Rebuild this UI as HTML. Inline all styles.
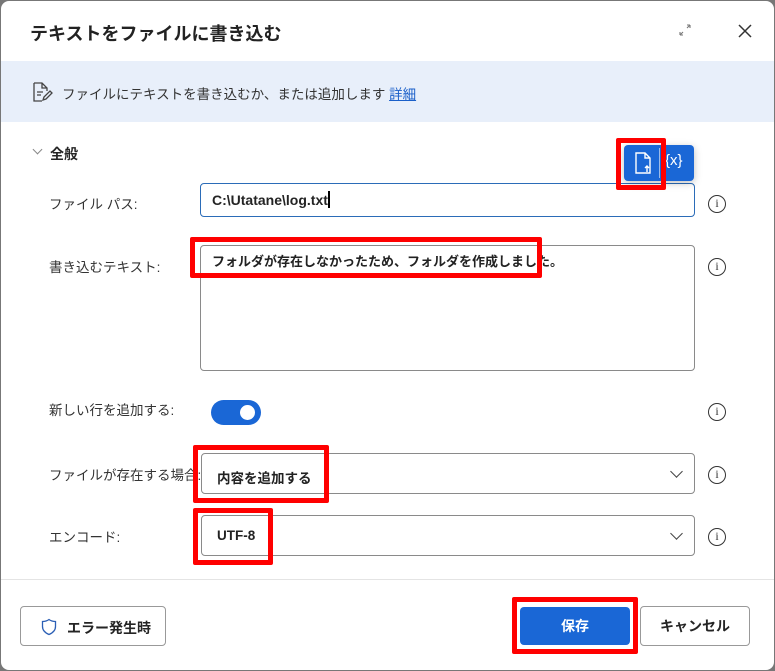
<!DOCTYPE html>
<html><head><meta charset="utf-8"><style>
*{box-sizing:border-box;margin:0;padding:0}
body{width:775px;height:671px;background:#777;position:relative;overflow:hidden;font-family:"Liberation Sans","Noto Sans CJK JP",sans-serif;color:#242424}
.win{position:absolute;left:1px;top:1px;width:773px;height:669px;background:#fff;border-radius:8px}
.a{position:absolute}
.title{left:29px;top:19px;font-size:18px;font-weight:bold;color:#222}
.band{left:0;top:60px;width:773px;height:61px;background:#e8effa}
.lbl{font-size:13.5px;color:#333}
.inp{border:1px solid #8a8a8a;border-radius:4px;background:#fff}
.red{border:5px solid #f00;border-radius:2px}
.info{width:18px;height:18px;border:1.4px solid #333;border-radius:50%;font-size:12px;text-align:center;line-height:15px;font-family:"Liberation Serif",serif;color:#333}
.chev{width:9px;height:9px;border-right:1.5px solid #444;border-bottom:1.5px solid #444;transform:rotate(45deg)}
.val{font-size:13.5px;font-weight:bold;color:#222}
.btn{border:1px solid #999;border-radius:4px;background:#fff;font-size:14px;font-weight:bold;text-align:center}
</style></head><body>
<div class="win">
<div class="a title">テキストをファイルに書き込む</div>
<svg class="a" style="left:677px;top:22px" width="14" height="14" viewBox="0 0 14 14"><path d="M2 12L5 9M2 12h3M2 12V9M12 2L9 5M12 2H9M12 2v3" stroke="#777" stroke-width="1.1" fill="none"/></svg>
<svg class="a" style="left:737px;top:23px" width="14" height="14" viewBox="0 0 14 14"><path d="M1 1L13 13M13 1L1 13" stroke="#333" stroke-width="1.5"/></svg>
<div class="a band"></div>
<svg class="a" style="left:30px;top:80px" width="22" height="22" viewBox="0 0 22 22"><path d="M3 2h8l5 5v3M3 2v18h8M11 2v5h5M6 11h6M6 14h4" stroke="#444" stroke-width="1.3" fill="none"/><path d="M12 19l1-3 6-6 2 2-6 6z" stroke="#444" stroke-width="1.3" fill="none"/></svg>
<div class="a" style="left:61px;top:82px;font-size:13.5px;color:#333">ファイルにテキストを書き込むか、または追加します <span style="color:#1a5fc9;text-decoration:underline">詳細</span></div>
<div class="a chev" style="left:33px;top:145px;width:7px;height:7px;border-color:#888"></div>
<div class="a" style="left:49px;top:143px;font-size:14px;font-weight:bold">全般</div>

<div class="a lbl" style="left:48px;top:192px">ファイル パス:</div>
<div class="a inp" style="left:199px;top:182px;width:495px;height:34px;border-color:#2b6cb8"></div>
<div class="a" style="left:211px;top:190px;font-size:14px;font-weight:bold">C:\Utatane\log.txt<span style="display:inline-block;width:2px;height:17px;background:#000;vertical-align:-3px"></span></div>
<div class="a info" style="left:707px;top:194px">i</div>
<div class="a" style="left:623px;top:144px;width:70px;height:36px;background:#1a67d6;border-radius:4px;box-shadow:0 2px 8px rgba(0,0,0,.25)"></div>
<svg class="a" style="left:630px;top:150px" width="24" height="24" viewBox="0 0 24 24"><path d="M5 2h9l5 5v15H5z M14 2v5h5" stroke="#fff" stroke-width="1.4" fill="none"/><path d="M16 21v-6M14 17l2-2 2 2" stroke="#fff" stroke-width="1.4" fill="none"/></svg>
<div class="a" style="left:658px;top:147px;width:1px;height:30px;background:#9bbbe8"></div>
<div class="a" style="left:664px;top:151px;color:#fff;font-size:15px">{x}</div>
<div class="a red" style="left:615px;top:137px;width:50px;height:52px"></div>

<div class="a lbl" style="left:48px;top:255px">書き込むテキスト:</div>
<div class="a inp" style="left:199px;top:244px;width:495px;height:126px"></div>
<div class="a val" style="left:211px;top:250px;font-size:13px">フォルダが存在しなかったため、フォルダを作成しました。</div>
<div class="a red" style="left:189px;top:236px;width:352px;height:41px"></div>
<div class="a info" style="left:707px;top:257px">i</div>

<div class="a lbl" style="left:48px;top:398px">新しい行を追加する:</div>
<div class="a" style="left:210px;top:399px;width:50px;height:25px;border-radius:13px;background:#1a67d6"></div>
<div class="a" style="left:239px;top:404px;width:15px;height:15px;border-radius:50%;background:#fff"></div>
<div class="a info" style="left:707px;top:402px">i</div>

<div class="a lbl" style="left:48px;top:463px">ファイルが存在する場合:</div>
<div class="a inp" style="left:200px;top:452px;width:494px;height:41px"></div>
<div class="a val" style="left:216px;top:466px">内容を追加する</div>
<div class="a chev" style="left:671px;top:466px"></div>
<div class="a red" style="left:192px;top:444px;width:136px;height:58px"></div>
<div class="a info" style="left:707px;top:465px">i</div>

<div class="a lbl" style="left:48px;top:525px">エンコード:</div>
<div class="a inp" style="left:200px;top:514px;width:494px;height:41px"></div>
<div class="a val" style="left:216px;top:527px">UTF-8</div>
<div class="a chev" style="left:671px;top:528px"></div>
<div class="a red" style="left:192px;top:507px;width:80px;height:57px"></div>
<div class="a info" style="left:707px;top:527px">i</div>

<div class="a" style="left:0;top:578px;width:773px;height:1px;background:#e4e4e4"></div>
<div class="a btn" style="left:19px;top:605px;width:146px;height:40px"></div>
<svg class="a" style="left:40px;top:617px" width="16" height="18" viewBox="0 0 16 18"><path d="M8 1.5C6 3 4 3.5 1.5 3.5v5c0 4 3 6.5 6.5 8 3.5-1.5 6.5-4 6.5-8v-5C12 3.5 10 3 8 1.5z" stroke="#2b5fb5" stroke-width="1.3" fill="none"/></svg>
<div class="a" style="left:66px;top:617px;font-size:14px;font-weight:bold">エラー発生時</div>
<div class="a" style="left:519px;top:606px;width:110px;height:38px;background:#1a67d6;border-radius:4px;color:#fff;font-size:14px;font-weight:bold;text-align:center;line-height:38px">保存</div>
<div class="a red" style="left:511px;top:596px;width:126px;height:57px"></div>
<div class="a btn" style="left:639px;top:605px;width:110px;height:40px;line-height:38px">キャンセル</div>
</div>
</body></html>
